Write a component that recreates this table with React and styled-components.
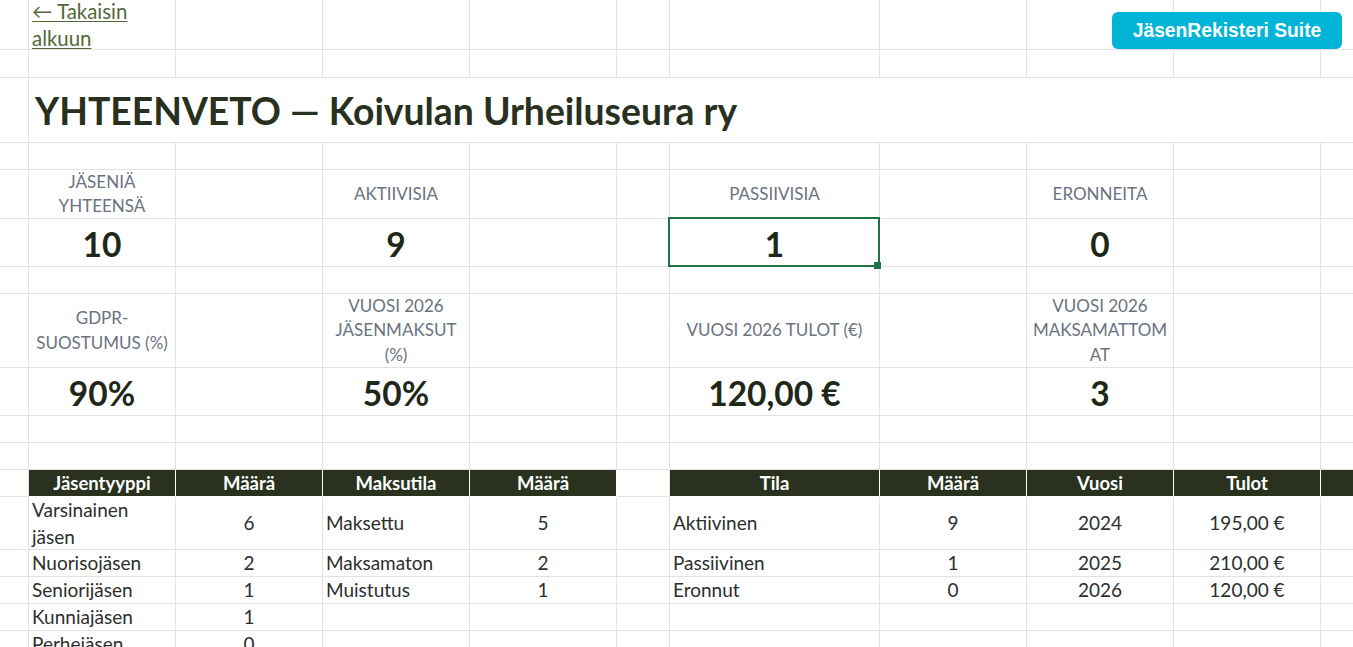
import React from "react";
import styled, { createGlobalStyle, css } from "styled-components";

const Global = createGlobalStyle`
  html, body { margin: 0; padding: 0; background: #ffffff; overflow: hidden; }
  body { font-family: Lato, "Open Sans", sans-serif; }
`;

const COLS = [29, 147, 147, 147, 147, 53, 210, 147, 147, 147, 147];
const GRID = "#e2e2e2";
const DARK = "#2a321f";

const Page = styled.div`
  position: relative;
  width: 1353px;
  height: 647px;
  overflow: hidden;
  background: #fff;
`;

const Sheet = styled.div`
  display: flex;
  flex-direction: column;
  width: ${COLS.reduce((a, b) => a + b, 0)}px;
`;

const Row = styled.div`
  display: grid;
  grid-template-columns: ${COLS.map((c) => c + "px").join(" ")};
  grid-template-rows: ${(p) => p.$h}px;
  height: ${(p) => p.$h}px;
`;

const kinds = {
  link: css`
    align-items: center;
    padding: 0 3px;
    font-size: 20.4px;
    line-height: 27px;
    overflow: visible;
  `,
  title: css`
    align-items: center;
    padding: 0 6px;
    font-size: 37.3px;
    font-weight: 700;
    color: #283020;
    white-space: nowrap;
  `,
  label: css`
    align-items: center;
    justify-content: center;
    text-align: center;
    padding: 0 3px;
    font-size: 17px;
    line-height: 24.5px;
    color: #6b7280;
    text-transform: uppercase;
    overflow-wrap: anywhere;
  `,
  value: css`
    align-items: center;
    justify-content: center;
    padding-top: 3px;
    font-size: 33.5px;
    font-weight: 700;
    color: #1f2818;
  `,
  header: css`
    align-items: center;
    justify-content: center;
    background: ${DARK};
    color: #ffffff;
    font-weight: 700;
    font-size: 18.5px;
    border-right-color: #ffffff;
    border-bottom-color: #ffffff;
  `,
  data: css`
    align-items: center;
    padding: 1px 12px 0 3px;
    font-size: 19px;
    line-height: 26.5px;
    color: #2e2e2e;
  `,
  plain: css``,
};

const Cell = styled.div`
  position: relative;
  box-sizing: border-box;
  display: flex;
  min-width: 0;
  min-height: 0;
  border-right: 1px solid ${GRID};
  border-bottom: 1px solid ${GRID};
  grid-column: span ${(p) => p.$span || 1};
  ${(p) => kinds[p.$kind || "plain"]}
  ${(p) =>
    p.$align === "center" &&
    css`
      justify-content: center;
      text-align: center;
      padding-left: 3px;
      padding-right: 3px;
    `}
`;

const BackLink = styled.a`
  color: #55683a;
  text-decoration: underline;
  text-underline-offset: 2px;
  text-decoration-thickness: 1px;
`;

const Selection = styled.div`
  position: absolute;
  left: -2px;
  top: -2px;
  right: -1px;
  bottom: -1px;
  border: 2px solid #217346;
  pointer-events: none;
  z-index: 2;
`;

const Handle = styled.div`
  position: absolute;
  right: -3px;
  bottom: -4px;
  width: 7px;
  height: 7px;
  background: #217346;
`;

const SuiteButton = styled.div`
  position: absolute;
  top: 12px;
  right: 11px;
  width: 230px;
  height: 37px;
  box-sizing: border-box;
  display: flex;
  align-items: center;
  justify-content: center;
  background: #00b4d8;
  border-radius: 6px;
  color: #ffffff;
  font-family: "Liberation Sans", Arial, sans-serif;
  font-weight: 700;
  font-size: 19.3px;
  z-index: 3;
`;

const E = (n = 1) => Array.from({ length: n }, () => ({}));

const rows = [
  {
    h: 50,
    cells: [
      {},
      {
        kind: "link",
        content: <BackLink href="#">← Takaisin alkuun</BackLink>,
      },
      ...E(9),
    ],
  },
  { h: 28, cells: E(11) },
  {
    h: 65,
    cells: [{}, { kind: "title", span: 10, content: "YHTEENVETO — Koivulan Urheiluseura ry" }],
  },
  { h: 27, cells: E(11) },
  {
    h: 49,
    cells: [
      {},
      { kind: "label", content: "Jäseniä yhteensä" },
      {},
      { kind: "label", content: "Aktiivisia" },
      {},
      {},
      { kind: "label", content: "Passiivisia" },
      {},
      { kind: "label", content: "Eronneita" },
      {},
      {},
    ],
  },
  {
    h: 48,
    cells: [
      {},
      { kind: "value", content: "10" },
      {},
      { kind: "value", content: "9" },
      {},
      {},
      { kind: "value", content: "1", selected: true },
      {},
      { kind: "value", content: "0" },
      {},
      {},
    ],
  },
  { h: 27, cells: E(11) },
  {
    h: 74,
    cells: [
      {},
      { kind: "label", content: "GDPR-suostumus (%)" },
      {},
      { kind: "label", content: "Vuosi 2026 jäsenmaksut (%)" },
      {},
      {},
      { kind: "label", content: "Vuosi 2026 tulot (€)" },
      {},
      { kind: "label", content: "Vuosi 2026 maksamattomat" },
      {},
      {},
    ],
  },
  {
    h: 48,
    cells: [
      {},
      { kind: "value", content: "90%" },
      {},
      { kind: "value", content: "50%" },
      {},
      {},
      { kind: "value", content: "120,00 €" },
      {},
      { kind: "value", content: "3" },
      {},
      {},
    ],
  },
  { h: 27, cells: E(11) },
  { h: 27, cells: E(11) },
  {
    h: 27,
    cells: [
      {},
      { kind: "header", content: "Jäsentyyppi" },
      { kind: "header", content: "Määrä" },
      { kind: "header", content: "Maksutila" },
      { kind: "header", content: "Määrä" },
      {},
      { kind: "header", content: "Tila" },
      { kind: "header", content: "Määrä" },
      { kind: "header", content: "Vuosi" },
      { kind: "header", content: "Tulot" },
      { kind: "header", content: "" },
    ],
  },
];

const dataRows = [
  { h: 53, v: ["Varsinainen jäsen", "6", "Maksettu", "5", "Aktiivinen", "9", "2024", "195,00 €"] },
  { h: 27, v: ["Nuorisojäsen", "2", "Maksamaton", "2", "Passiivinen", "1", "2025", "210,00 €"] },
  { h: 27, v: ["Seniorijäsen", "1", "Muistutus", "1", "Eronnut", "0", "2026", "120,00 €"] },
  { h: 27, v: ["Kunniajäsen", "1", "", "", "", "", "", ""] },
  { h: 27, v: ["Perhejäsen", "0", "", "", "", "", "", ""] },
  { h: 27, v: ["", "", "", "", "", "", "", ""] },
];

dataRows.forEach(({ h, v }) => {
  rows.push({
    h,
    cells: [
      {},
      { kind: "data", content: v[0] },
      { kind: "data", align: "center", content: v[1] },
      { kind: "data", content: v[2] },
      { kind: "data", align: "center", content: v[3] },
      {},
      { kind: "data", content: v[4] },
      { kind: "data", align: "center", content: v[5] },
      { kind: "data", align: "center", content: v[6] },
      { kind: "data", align: "center", content: v[7] },
      {},
    ],
  });
});

export default function App() {
  return (
    <>
      <Global />
      <Page>
        <Sheet>
          {rows.map((r, ri) => (
            <Row key={ri} $h={r.h}>
              {r.cells.map((c, ci) => (
                <Cell key={ci} $kind={c.kind} $span={c.span} $align={c.align}>
                  {c.content ? <span>{c.content}</span> : null}
                  {c.selected ? (
                    <Selection>
                      <Handle />
                    </Selection>
                  ) : null}
                </Cell>
              ))}
            </Row>
          ))}
        </Sheet>
        <SuiteButton>JäsenRekisteri Suite</SuiteButton>
      </Page>
    </>
  );
}
